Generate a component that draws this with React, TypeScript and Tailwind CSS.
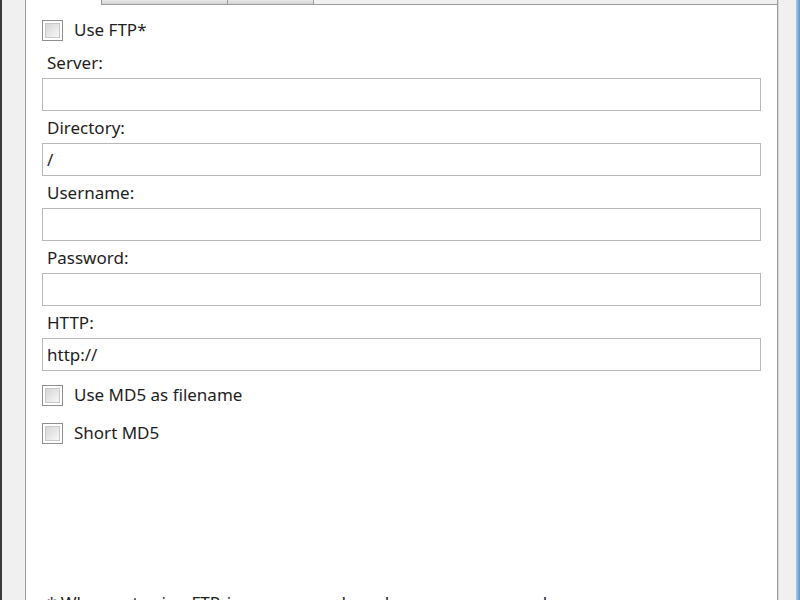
import React from 'react';

const font = { fontFamily: '"Noto Sans", "Open Sans", sans-serif' };

const CheckBox = ({ label }: { label: string }) => (
  <label className="flex items-center h-[22px] gap-[11px] text-[17px] text-[#1e1e1e] select-none">
    <span className="w-[21px] h-[21px] border border-[#8f8f8f] bg-white p-[2px]">
      <span className="block w-full h-full bg-gradient-to-br from-[#d6d6d6] to-[#f7f7f7] border border-[#c8c8c8]" />
    </span>
    <span>{label}</span>
  </label>
);

const Field = ({ label, value = '' }: { label: string; value?: string }) => (
  <div className="flex flex-col">
    <div className="h-[32px] pl-[5px] flex items-end pb-[4px] text-[17px] leading-[22px] text-[#1e1e1e]">{label}</div>
    <div className="h-[33px] border border-[#b9b9b9] bg-white flex items-center px-[4px] text-[17px] text-[#1e1e1e]">
      {value}
    </div>
  </div>
);

export default function App() {
  return (
    <div className="w-[800px] h-[600px] flex bg-[#f0f0f0] overflow-hidden" style={font}>
      <div className="w-[2px] bg-[#3a3a3a]" />
      <div className="w-[23px] bg-[#f0f0f0]" />

      <div className="w-[753px] flex flex-col">
        {/* tab strip: selected tab on the left merges into the page */}
        <div className="h-[5px] flex">
          <div className="w-[76px] bg-white border-l border-[#9c9c9c]" />
          <div className="w-[127px] bg-gradient-to-b from-[#e8e8e8] to-[#d4d4d4] border-l border-r border-b border-[#9c9c9c]" />
          <div className="w-[86px] bg-gradient-to-b from-[#e8e8e8] to-[#d4d4d4] border-r border-b border-[#9c9c9c]" />
          <div className="flex-1 border-b border-r border-[#9c9c9c]" />
        </div>

        <div className="flex-1 bg-white border-l border-r border-[#9c9c9c] px-[16px] pt-[14px] flex flex-col">
          <CheckBox label="Use FTP*" />
          <div className="flex flex-col mt-[5px]">
            <Field label="Server:" />
          </div>
          <Field label="Directory:" value="/" />
          <Field label="Username:" />
          <Field label="Password:" />
          <Field label="HTTP:" value="http://" />
          <div className="mt-[13px] flex flex-col gap-[16px]">
            <CheckBox label="Use MD5 as filename" />
            <CheckBox label="Short MD5" />
          </div>
          <div className="mt-auto pl-[5px] text-[17px] leading-[22px] text-[#1e1e1e] mb-[-14px]">
            * When not using FTP, imgur.com and sendspace.com are used.
          </div>
        </div>
      </div>

      <div className="w-[18px] bg-[#f0f0f0] border-l border-[#d8d8d8]" />
      <div className="w-[4px] bg-gradient-to-r from-[#a9cbe8] to-[#5d95c8]" />
    </div>
  );
}
